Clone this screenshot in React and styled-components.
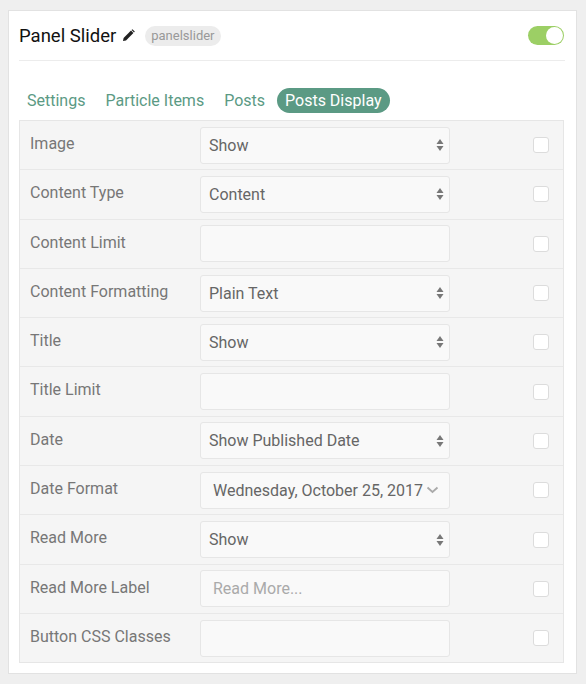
import styled, { createGlobalStyle } from 'styled-components';

const GlobalStyle = createGlobalStyle`
  body {
    margin: 0;
    background: #efefef;
    font-family: Roboto, "Liberation Sans", sans-serif;
  }
`;

const rows = [
  { label: 'Image', type: 'select', value: 'Show' },
  { label: 'Content Type', type: 'select', value: 'Content' },
  { label: 'Content Limit', type: 'input' },
  { label: 'Content Formatting', type: 'select', value: 'Plain Text' },
  { label: 'Title', type: 'select', value: 'Show' },
  { label: 'Title Limit', type: 'input' },
  { label: 'Date', type: 'select', value: 'Show Published Date' },
  { label: 'Date Format', type: 'combo', value: 'Wednesday, October 25, 2017' },
  { label: 'Read More', type: 'select', value: 'Show' },
  { label: 'Read More Label', type: 'input', placeholder: 'Read More...' },
  { label: 'Button CSS Classes', type: 'input' },
];

const tabs = ['Settings', 'Particle Items', 'Posts', 'Posts Display'];

const SortArrows = () => (
  <svg width="8" height="14" viewBox="0 0 8 14">
    <path d="M4 1 L7.5 6 L0.5 6 Z" fill="#777" />
    <path d="M4 13 L7.5 8 L0.5 8 Z" fill="#777" />
  </svg>
);

const Chevron = () => (
  <svg width="13" height="8" viewBox="0 0 13 8">
    <path d="M1.5 1.5 L6.5 6 L11.5 1.5" fill="none" stroke="#aaa" strokeWidth="1.8" />
  </svg>
);

const Pencil = () => (
  <svg width="13" height="13" viewBox="0 0 13 13">
    <path d="M1 12 L1.6 9 L9 1.6 L11.4 4 L4 11.4 Z" fill="#222" />
    <path d="M9.6 1 L10.4 0.2 L12.8 2.6 L12 3.4 Z" fill="#222" />
  </svg>
);

const App = () => {
  return (
    <>
      <GlobalStyle />
      <Card>
        <Header>
          <Title>Panel Slider</Title>
          <EditIcon>
            <Pencil />
          </EditIcon>
          <Badge>panelslider</Badge>
          <Toggle>
            <Knob />
          </Toggle>
        </Header>
        <Tabs>
          {tabs.map((t) => (
            <Tab key={t} $active={t === 'Posts Display'}>
              {t}
            </Tab>
          ))}
        </Tabs>
        <Table>
          {rows.map((r) => (
            <Row key={r.label}>
              <Label>{r.label}</Label>
              <Field>
                {r.type === 'select' && (
                  <SelectBox>
                    <span>{r.value}</span>
                    <SortArrows />
                  </SelectBox>
                )}
                {r.type === 'combo' && (
                  <ComboBox>
                    <span>{r.value}</span>
                    <Chevron />
                  </ComboBox>
                )}
                {r.type === 'input' && (
                  <TextInput>
                    {r.placeholder && <Placeholder>{r.placeholder}</Placeholder>}
                  </TextInput>
                )}
              </Field>
              <CheckCell>
                <Check />
              </CheckCell>
            </Row>
          ))}
        </Table>
      </Card>
    </>
  );
};

export default App;

const Card = styled.div`
  background: #fff;
  border: 1px solid #e2e2e2;
  width: 546px;
  margin: 10px 0 0 8px;
  padding: 0 11px 10px 10px;
  box-sizing: content-box;
`;

const Header = styled.div`
  display: flex;
  align-items: center;
  height: 49px;
  border-bottom: 1px solid #ececec;
`;

const Title = styled.h2`
  margin: 0;
  font-size: 18.5px;
  font-weight: 400;
  color: #111;
`;

const EditIcon = styled.span`
  display: inline-flex;
  margin-left: 6px;
`;

const Badge = styled.span`
  margin-left: 10px;
  background: #ececec;
  color: #999;
  font-size: 13px;
  border-radius: 10px;
  padding: 3px 6px;
  line-height: 14px;
`;

const Toggle = styled.div`
  margin-left: auto;
  margin-right: 1px;
  width: 36px;
  height: 19px;
  border-radius: 10px;
  background: #9ccf65;
  position: relative;
`;

const Knob = styled.div`
  position: absolute;
  right: 1px;
  top: 1px;
  width: 17px;
  height: 17px;
  border-radius: 50%;
  background: #fff;
`;

const Tabs = styled.div`
  display: flex;
  align-items: center;
  gap: 4px;
  padding: 27px 0 7px 0;
`;

const Tab = styled.span`
  font-size: 16px;
  line-height: 25px;
  padding: 0 8px;
  border-radius: 13px;
  color: ${(p) => (p.$active ? '#fff' : '#5b9a84')};
  background: ${(p) => (p.$active ? '#5b9a84' : 'transparent')};
`;

const Table = styled.div`
  border: 1px solid #e6e6e6;
  margin-right: 1px;
`;

const Row = styled.div`
  display: grid;
  grid-template-columns: 180px 250px 1fr;
  height: 48.3px;
  background: #f5f5f5;
  border-bottom: 1px solid #e8e8e8;

  &:last-child {
    border-bottom: none;
  }
`;

const Label = styled.div`
  padding: 13px 0 0 10px;
  font-size: 16px;
  color: #777;
`;

const Field = styled.div`
  display: flex;
  align-items: center;
`;

const boxBase = `
  box-sizing: border-box;
  width: 100%;
  height: 37px;
  background: #f9f9f9;
  border: 1px solid #e6e6e6;
  border-radius: 3px;
  font-size: 16px;
  color: #666;
  display: flex;
  align-items: center;
`;

const SelectBox = styled.div`
  ${boxBase}
  justify-content: space-between;
  padding: 0 5px 0 8px;
`;

const ComboBox = styled.div`
  ${boxBase}
  padding: 0 10px 0 12px;
  justify-content: space-between;
`;

const TextInput = styled.div`
  ${boxBase}
  padding: 0 12px;
`;

const Placeholder = styled.span`
  color: #aaa;
`;

const CheckCell = styled.div`
  display: flex;
  align-items: center;
  justify-content: flex-end;
  padding-right: 14px;
`;

const Check = styled.span`
  box-sizing: border-box;
  width: 16px;
  height: 16px;
  background: #fff;
  border: 1px solid #dcdcdc;
  border-radius: 3px;
`;
